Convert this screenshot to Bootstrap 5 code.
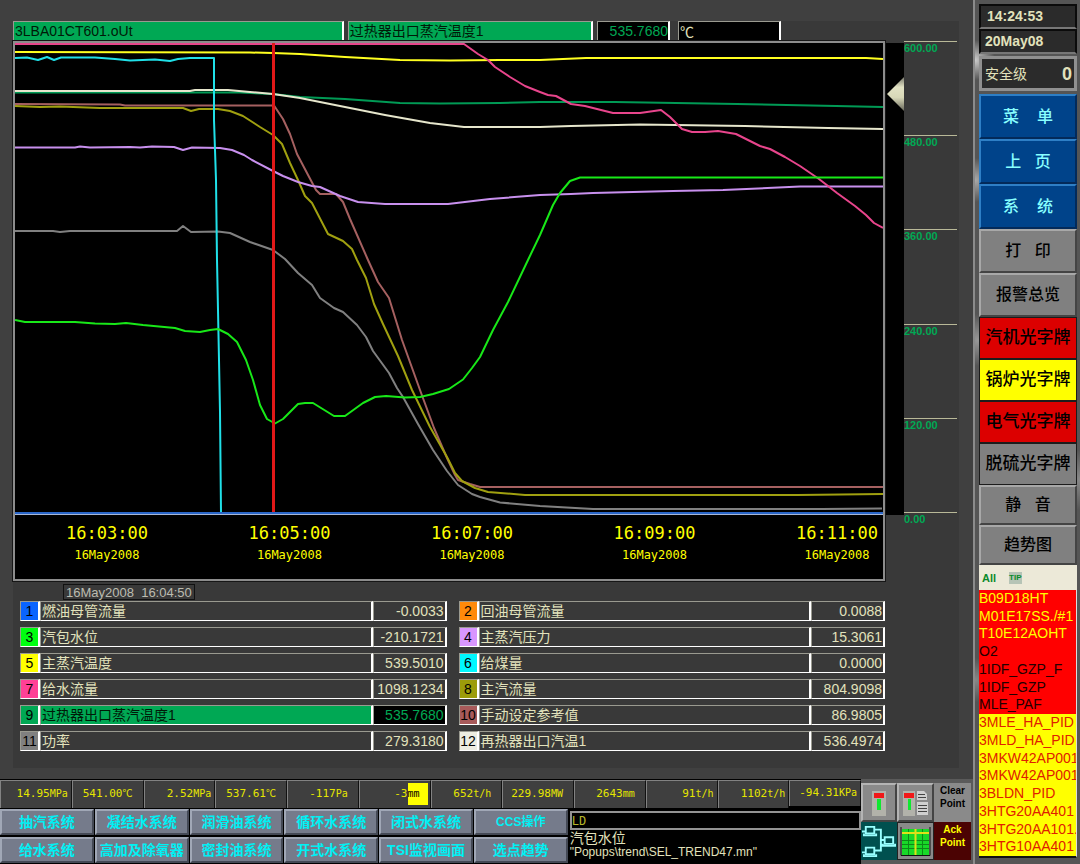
<!DOCTYPE html>
<html lang="zh-CN">
<head>
<meta charset="utf-8">
<meta name="viewport" content="width=device-width, initial-scale=1">
<title>趋势图</title>
<link rel="stylesheet" href="https://cdn.jsdelivr.net/npm/bootstrap@5.3.0/dist/css/bootstrap.min.css">
<style>
:root{--cream:#e2e2bc;--panel:#393939;--green:#00a854;--ui:"Liberation Sans","Noto Sans CJK SC",sans-serif;--mono:"DejaVu Sans Mono","Noto Sans CJK SC",monospace}
body{background:#000;font-family:var(--ui);font-size:14px;line-height:16px;color:var(--cream)}
button{font-family:inherit;padding:0;line-height:16px}
.desk{background:#404040}
.trend-area{padding:21px 14px 11px 13px}
.trend-inner{background:var(--panel)}
.sunk{border:1px solid #fff;border-right-width:2px;border-top-color:#9a9a90;border-left-color:#9a9a90}
.head-row{height:20px;gap:4px;padding-right:178px}
.head-row>div{height:20px;line-height:18px;padding-left:1px;white-space:nowrap;overflow:hidden}
.on-green{background:var(--green);color:#001a08}
.on-black{background:#000;color:var(--green)}
.w-tag{flex:332 1 0}.w-desc{flex:245 1 0}.w-num{flex:0 0 73px}.w-unit{flex:0 0 103px;margin-left:4px}
.w-unit span{font-family:"Noto Sans CJK SC",sans-serif;color:var(--cream)}
.chart-frame{border:2px solid #8c8c8c;background:#000;outline:1px solid #161616}
.plot{min-height:300px}
.plot svg{width:100%;height:100%;position:absolute;inset:0}
.plot polyline{fill:none;stroke-width:2;vector-effect:non-scaling-stroke;stroke-linejoin:round}
.time-axis{height:65px;padding:8px 5px 0 51px;color:#ff0;font-family:var(--mono);text-align:center;border-top:1px solid #a8b8d8}
.time-axis .t1{font-size:17px;line-height:20px}
.time-axis .t2{font-size:12px;line-height:24px}
.strip{width:18px;margin:2px 0 66px 1px;background:#000}
.pointer{right:0;transform:translateY(-50%)}
.scale{width:53px;margin:0 2px 68px 0}
.scale div{height:1px;background:#b9b998;color:var(--green);font-size:11px;font-weight:700;line-height:14px}
.stamp{margin:3px 0 0 50px;height:16px;line-height:15px;font-size:13px;border:1px solid #111;padding:0 2px;color:#bcbcb0;white-space:pre}
.legend-row{padding:1px 0 17px 7px;margin-right:74px;gap:12px}
.legend{border-collapse:separate;border-spacing:0;width:100%;table-layout:fixed}
.legend th,.legend td{height:20px;padding:0 1px;line-height:18px;font-weight:400;white-space:nowrap;overflow:hidden}
.legend tr.gap td{height:6px;border:0;padding:0;line-height:6px}
.legend th{width:20px;color:#000;text-align:center;padding:0}
.legend td+td{width:74px;text-align:right}
.dash{height:85px;background:#000}
.readings{display:grid;grid-template-columns:repeat(12,minmax(0,1fr));height:29px;padding-top:1px}
.readings>div{background:#3f3f3f;border-left:1px solid #828282;border-top:1px solid #828282;border-right:1px solid #111;height:28px;line-height:25px;text-align:right;padding-right:3px;font-family:var(--mono);font-size:11px;color:#e6e600;white-space:nowrap}
.readings>.in{padding-right:10px}
.readings>.high{height:26px;line-height:23px}
.readings small{font-size:10px}
.readings .hot{display:inline-block;background:#ff0;color:#000;width:20px;height:22px;line-height:22px;margin-right:-8px;text-align:left}
.nav-grid{display:grid;grid-template-columns:repeat(6,1fr);grid-auto-rows:26px;gap:2px 1px;flex:569 1 0;padding-top:1px}
.nav-grid button{background:#757b8b;border:2px solid #a0a7b6;border-right-color:#444955;border-bottom-color:#444955;color:#00f0f4;font-size:14px;font-weight:700;white-space:nowrap;overflow:hidden}
.nav-grid .narrow{font-size:12px}
.console{flex:292 1 0;padding:3px 0 0 2px;min-width:0}
.console input{width:100%;height:19px;background:#000;border:2px solid #939393;color:#b6b62a;font:12px/15px var(--mono);padding:0}
.console .msg{font-size:14px;line-height:16px}
.console .path{font-size:12px;line-height:13px;white-space:pre}
.tools{width:112px;display:grid;grid-template-columns:36px 37px 37px;grid-template-rows:39px 38px;gap:0;padding-top:4px;background:#5a5a5a}
.tools button{border:1px solid #222;background:#8a8a8a;font-size:10px;line-height:13px;font-weight:700;color:#000;display:flex;align-items:center;justify-content:center}
.tools .raised{border:2px solid #b4b4b4;border-right-color:#444;border-bottom-color:#444}
.tools .top-text{align-items:flex-start;border-color:#8a8a8a}
.tools .ack{background:#4b0303;color:#ff0;border-color:#4b0303;align-items:flex-start}
.tools .net{background:#00504f;border-color:#00504f}
.side{width:107px;padding:4px 3px 6px 4px;border-left:2px solid #8b8b8b;background:radial-gradient(circle at 0 60px,#ccc,#0000 20px),radial-gradient(circle at 0 180px,#aaa,#0000 22px),radial-gradient(circle at 3px 340px,#999,#0000 26px),radial-gradient(circle at 100% 480px,#888,#0000 30px),radial-gradient(circle at 0 680px,#888,#0000 22px),#555}
.clock{height:25px;background:#2b2b2b;border:2px solid #0b0b0b;border-bottom-color:#777;font-weight:700;line-height:21px;padding-left:6px}
.clock.date{padding-left:4px}
.level{height:35px;margin:2px 0 3px;background:#2b2b2b;border:3px solid #909090;padding:0 2px 0 3px}
.level b{font-size:18px}
.side button{border:2px solid #a8a8a8;border-right-color:#444;border-bottom-color:#444;background:#808080;color:#000;font-size:16px;font-weight:500;white-space:nowrap;height:44px}
.side .blue{background:#00438a;border-color:#2e7fc6 #032a5a #032a5a #2e7fc6;color:#8ff;height:45px}
.side .alarm{height:42px;border:1px solid #1c1c1c;font-size:17px}
.side .alarm.trip{background:#dc0000}
.side .alarm.warned{background:#ff0}
.side .low{height:40px}
.alarm-bar{background:#ece9d8;height:25px;gap:13px;padding-left:3px}
.side .alarm-bar button{height:12px;border:0;background:none;font-size:11px;line-height:12px;font-weight:700;color:#0a8a2a}
.side .alarm-bar .tip{background:#b6c4b6;font-size:8px}
.alarm-list{border-right:1px solid #ddd;border-bottom:2px solid #111}
.alarm-list li{background:#f00;color:#200;flex:1 1 0;min-height:17px;line-height:17px;white-space:nowrap;overflow:hidden}
.alarm-list .new{color:#ff0}
.alarm-list .warn{background:#ff0;color:#e02000}
</style>
<script src="https://cdn.jsdelivr.net/npm/bootstrap@5.3.0/dist/js/bootstrap.bundle.min.js"></script>
</head>
<body>
<div class="d-flex min-vh-100">
<main class="d-flex flex-column flex-fill overflow-hidden">
 <section class="desk trend-area d-flex flex-column flex-fill">
  <div class="trend-inner d-flex flex-column flex-fill">
   <div class="head-row d-flex">
    <div class="w-tag sunk on-green">3LBA01CT601.oUt</div>
    <div class="w-desc sunk on-green">过热器出口蒸汽温度1</div>
    <div class="w-num sunk on-black text-end">535.7680</div>
    <div class="w-unit sunk on-black"><span>℃</span></div>
   </div>
   <div class="d-flex flex-fill">
    <div class="chart-frame d-flex flex-column flex-fill">
     <div class="plot position-relative flex-fill">
      <svg viewBox="15 43 868 471" preserveAspectRatio="none" role="img" aria-label="趋势曲线">
       <polyline stroke="#808080" points="15,231 53,231 60,232 70,231 177,231 183,226 191,232 218,231.5 230,233 250,242 273,250 285,259 298,273 312,285 320,298 334,308 343,312 357,325 366,337 373,351 389,373 397,388 403,397 418,424 433,450 447,471 458,485 472,494 480,497 500,502.5 540,506 593,509 822,509 882,508.5"/>
       <polyline stroke="#a56060" points="15,104 120,104.5 125,105.5 274,105.5 283,119 290,134 297,154 307,173 316,190 320,194 336,194 343,202 350,219 368,260 378,282 389,298 402,340 420,390 434,428 447,458 455,475 458,480 470,484 480,487 883,487"/>
       <polyline stroke="#a0a010" points="15,106 40,107 60,106.5 100,108 183,108 191,111 199,109 218,109 230,111 243,116 260,127 273,135 282,144 290,163 298,180 305,196 312,203 328,234 343,241 352,249 357,260 366,278 374,304 383,324 398,356 412,390 430,427 447,457 455,473 462,481 475,488 488,492 525,495 798,495 883,494"/>
       <polyline stroke="#009a55" points="15,92.5 240,92.5 273,94 300,97 345,99 400,103 440,103.5 500,103 540,102 615,102 737,104 836,106 883,107"/>
       <polyline stroke="#e6e6cc" points="15,91 190,91 195,90 228,90 250,92 273,94 300,98 345,107 385,115 430,123 464,127 540,127 571,126 640,124.5 745,126 828,128 883,129"/>
       <polyline stroke="#c890ee" points="15,147.5 75,147.5 80,146.5 90,147.5 130,147 140,147.5 152,146.5 174,147 183,150 192,147.5 220,148 232,150 244,155 252,160 273,171 283,176 298,182 312,186 320,187 340,196 358,202 385,204 448,204 490,199 540,195 571,194 593,193 673,191 723,190 800,186.5 883,186.5"/>
       <polyline stroke="#ffff20" points="15,52 250,52.5 273,53 300,54 345,57 400,60 450,60.5 500,60 540,60 586,58 866,58 883,59"/>
       <polyline stroke="#20e0e8" points="15,58 27,57.5 38,60 47,57 54,60 61,57.5 95,57.5 115,59 130,60.5 155,59.5 170,61 178,59 190,58 214,58 214,120 216,180 217,260 218,310 219,360 220,412 221,512"/>
       <polyline stroke="#e8458c" points="15,44 464,44 478,54 488,60 495,67 510,77 525,86 540,92 548,95 556,96 571,104 585,106 613,113 640,113 661,110 670,117 682,129 692,132 705,132 718,131 736,134 760,146 770,149 785,157 800,166 819,179 837,193 855,206 866,215 874,223 883,228"/>
       <polyline stroke="#18e818" points="15,320 25,322 75,322 95,323.5 115,324 126,323 143,325 175,328 185,331 200,332 210,330 218,329 228,334 237,342 246,360 253,380 260,405 267,419 275,423.5 283,419 298,404 305,403 313,403 334,416 345,416 363,403 375,397 386,396 405,397.5 420,397 433,394 449,389 463,379.5 472,368 480,357 493,330 508,302 528,260 540,235 553,205 560,193 570,181 580,177.5 883,177.5"/>
       <polyline stroke="#2a66c8" points="15,513 883,513"/>
       <polyline stroke="#e01818" style="stroke-width:3" points="273.5,43 273.5,512"/>
      </svg>
     </div>
     <div class="time-axis d-flex justify-content-between">
      <div><div class="t1">16:03:00</div><div class="t2">16May2008</div></div>
      <div><div class="t1">16:05:00</div><div class="t2">16May2008</div></div>
      <div><div class="t1">16:07:00</div><div class="t2">16May2008</div></div>
      <div><div class="t1">16:09:00</div><div class="t2">16May2008</div></div>
      <div><div class="t1">16:11:00</div><div class="t2">16May2008</div></div>
     </div>
    </div>
    <div class="strip position-relative">
     <svg class="pointer position-absolute" style="top:10.7%" width="17" height="34" viewBox="0 0 17 34"><defs><linearGradient id="pg" x1="0" y1="0" x2="0" y2="1"><stop offset="0" stop-color="#77776a"/><stop offset=".3" stop-color="#e2e2c4"/><stop offset=".6" stop-color="#d8d8b8"/><stop offset="1" stop-color="#66665a"/></linearGradient></defs><path d="M0 17 17 0v34z" fill="url(#pg)"/></svg>
    </div>
    <div class="scale d-flex flex-column justify-content-between">
     <div>600.00</div><div>480.00</div><div>360.00</div><div>240.00</div><div>120.00</div><div>0.00</div>
    </div>
   </div>
   <div class="stamp align-self-start">16May2008  16:04:50</div>
   <div class="legend-row d-flex">
    <table class="legend"><tbody>
     <tr><th class="sunk" style="background:#0a64ff">1</th><td class="sunk">燃油母管流量</td><td class="sunk">-0.0033</td></tr><tr class="gap"><td colspan="3"></td></tr>
     <tr><th class="sunk" style="background:#00ff10">3</th><td class="sunk">汽包水位</td><td class="sunk">-210.1721</td></tr><tr class="gap"><td colspan="3"></td></tr>
     <tr><th class="sunk" style="background:#ff0">5</th><td class="sunk">主蒸汽温度</td><td class="sunk">539.5010</td></tr><tr class="gap"><td colspan="3"></td></tr>
     <tr><th class="sunk" style="background:#ff4096">7</th><td class="sunk">给水流量</td><td class="sunk">1098.1234</td></tr><tr class="gap"><td colspan="3"></td></tr>
     <tr><th class="sunk" style="background:#00a854">9</th><td class="sunk on-green">过热器出口蒸汽温度1</td><td class="sunk on-black">535.7680</td></tr><tr class="gap"><td colspan="3"></td></tr>
     <tr><th class="sunk" style="background:#808080">11</th><td class="sunk">功率</td><td class="sunk">279.3180</td></tr>
    </tbody></table>
    <table class="legend"><tbody>
     <tr><th class="sunk" style="background:#ff8a0a">2</th><td class="sunk">回油母管流量</td><td class="sunk">0.0088</td></tr><tr class="gap"><td colspan="3"></td></tr>
     <tr><th class="sunk" style="background:#d896ff">4</th><td class="sunk">主蒸汽压力</td><td class="sunk">15.3061</td></tr><tr class="gap"><td colspan="3"></td></tr>
     <tr><th class="sunk" style="background:#00f8ff">6</th><td class="sunk">给煤量</td><td class="sunk">0.0000</td></tr><tr class="gap"><td colspan="3"></td></tr>
     <tr><th class="sunk" style="background:#9c9c0a">8</th><td class="sunk">主汽流量</td><td class="sunk">804.9098</td></tr><tr class="gap"><td colspan="3"></td></tr>
     <tr><th class="sunk" style="background:#a85a5a">10</th><td class="sunk">手动设定参考值</td><td class="sunk">86.9805</td></tr><tr class="gap"><td colspan="3"></td></tr>
     <tr><th class="sunk" style="background:#ecece0">12</th><td class="sunk">再热器出口汽温1</td><td class="sunk">536.4974</td></tr>
    </tbody></table>
   </div>
  </div>
 </section>
 <section class="dash d-flex">
  <div class="d-flex flex-column flex-fill overflow-hidden">
   <div class="readings">
    <div>14.95<small>MPa</small></div><div class="in">541.00<small>℃</small></div><div>2.52<small>MPa</small></div><div class="in">537.61<small>℃</small></div><div class="in">-117<small>Pa</small></div><div class="in">-3<small class="hot">mm</small></div><div class="in">652<small>t/h</small></div><div class="in">229.98<small>MW</small></div><div class="in">2643<small>mm</small></div><div>91<small>t/h</small></div><div>1102<small>t/h</small></div><div class="high">-94.31<small>KPa</small></div>
   </div>
   <div class="d-flex flex-fill">
    <div class="nav-grid">
     <button>抽汽系统</button><button>凝结水系统</button><button>润滑油系统</button><button>循环水系统</button><button>闭式水系统</button><button class="narrow">CCS操作</button>
     <button>给水系统</button><button>高加及除氧器</button><button>密封油系统</button><button>开式水系统</button><button>TSI监视画面</button><button>选点趋势</button>
    </div>
    <div class="console">
     <input type="text" value="LD" aria-label="命令" class="d-block">
     <div class="msg">汽包水位</div>
     <div class="path">"Popups\trend\SEL_TREND47.mn"</div>
    </div>
   </div>
  </div>
  <div class="tools">
   <button class="raised" aria-label="面板"><svg width="30" height="32" viewBox="0 0 30 32"><path d="M8 4h14v25H8z" fill="#b2b2aa"/><path d="M10 6h10v5H10z" fill="#f01818"/><path d="M13 12h4v11h-4z" fill="#10e830"/></svg></button>
   <button class="raised" aria-label="面板详情"><svg width="32" height="32" viewBox="0 0 32 32"><path d="M3 4h12v25H3z" fill="#b2b2aa"/><path d="M4 6h10v5H4z" fill="#f01818"/><path d="M8 12h3v11H8z" fill="#10e830"/><path d="M17 4h7l3 3v6H17zM17 15h11v13H17z" fill="#d0d0d0"/><path d="M18 7.500h7M18 10.500h8M18 18.500h9M18 21.500h9M18 24.500h9" stroke="#444"/></svg></button>
   <button class="top-text">Clear<br>Point</button>
   <button class="net" aria-label="网络"><svg width="36" height="36" viewBox="0 0 36 36" fill="none" stroke="#9ff" stroke-width="2"><path d="M4 3h9v7H4zM4 25h9v7H4zM24 14h9v7h-9z"/><path d="M2 10v2h13v-2M2 32v2h13v-2M22 21v2h13v-2M13 6h7v11h4M13 28h7V17M0 8h4M0 30h4"/></svg></button>
   <button aria-label="报表"><svg width="31" height="30" viewBox="0 0 31 30"><path d="M2 3h27v26H2z" fill="#18d828"/><path d="M2 14.500h27M2 18.500h27M2 22.500h27M8.500 3v26M22.500 3v26" stroke="#0c8a18"/><path d="M2 7h27M15.500 3v26" stroke="#e0e018" stroke-width="2"/><path d="M1 1v28.500h29V1" fill="none" stroke="#111"/></svg></button>
   <button class="ack">Ack<br>Point</button>
  </div>
 </section>
</main>
<aside class="side d-flex flex-column flex-shrink-0">
 <div class="clock">14:24:53</div>
 <div class="clock date">20May08</div>
 <div class="level d-flex justify-content-between align-items-center"><span>安全级</span><b>0</b></div>
 <button class="blue">菜&nbsp;&nbsp;&nbsp;&nbsp;单</button>
 <button class="blue">上&nbsp;&nbsp;&nbsp;页</button>
 <button class="blue">系&nbsp;&nbsp;&nbsp;&nbsp;统</button>
 <button>打&nbsp;&nbsp;&nbsp;印</button>
 <button>报警总览</button>
 <button class="alarm trip">汽机光字牌</button>
 <button class="alarm warned">锅炉光字牌</button>
 <button class="alarm trip">电气光字牌</button>
 <button class="alarm">脱硫光字牌</button>
 <button class="low">静&nbsp;&nbsp;&nbsp;音</button>
 <button class="low">趋势图</button>
 <div class="alarm-bar d-flex align-items-center"><button>All</button><button class="tip">TIP</button></div>
 <ul class="alarm-list list-unstyled m-0 d-flex flex-column flex-fill">
  <li class="new">B09D18HT</li><li class="new">M01E17SS./#1</li><li class="new">T10E12AOHT</li><li>O2</li><li>1IDF_GZP_F</li><li>1IDF_GZP</li><li>MLE_PAF</li>
  <li class="warn">3MLE_HA_PID</li><li class="warn">3MLD_HA_PID</li><li class="warn">3MKW42AP001</li><li class="warn">3MKW42AP001</li><li class="warn">3BLDN_PID</li><li class="warn">3HTG20AA401</li><li class="warn">3HTG20AA101.</li><li class="warn">3HTG10AA401</li>
 </ul>
</aside>
</div>
</body>
</html>
